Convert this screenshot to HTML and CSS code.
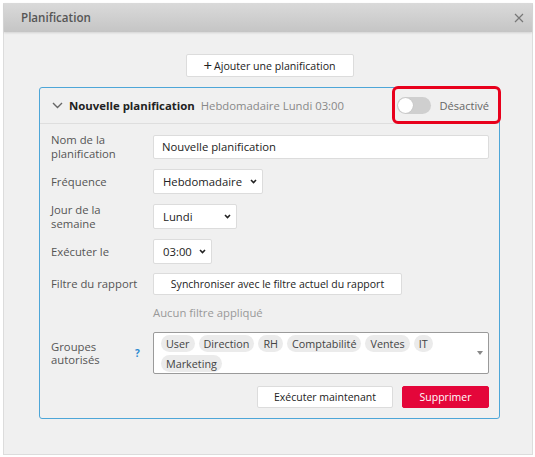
FILE: index.html
```html
<!DOCTYPE html>
<html>
<head>
    <title>Planification</title>
    <link rel="stylesheet" href="styles.css">
</head>
<body>
    <div class="dialog">
        <div class="dialog-header">
            <span class="dialog-title">Planification</span>
            <svg class="close-icon" width="10" height="10" viewBox="0 0 10 10">
                <path d="M1 1 L9 9 M9 1 L1 9" stroke="#777" stroke-width="1.2" fill="none"/>
            </svg>
        </div>

        <div class="dialog-body">
            <div class="add-row">
                <button class="btn btn-add"><span class="plus">+</span>Ajouter une planification</button>
            </div>

            <div class="schedule">
                <div class="schedule-header">
                    <svg class="chevron" width="11" height="7" viewBox="0 0 11 7">
                        <path d="M1 1 L5.5 5.5 L10 1" stroke="#666" stroke-width="1.4" fill="none"/>
                    </svg>
                    <span class="schedule-name">Nouvelle planification</span>
                    <span class="schedule-summary">Hebdomadaire Lundi 03:00</span>
                    <div class="status">
                        <span class="toggle"><span class="knob"></span></span>
                        <span class="status-text">Désactivé</span>
                        <span class="highlight"></span>
                    </div>
                </div>

                <div class="schedule-body">
                    <div class="row">
                        <label>Nom de la<br>planification</label>
                        <input class="text-input" type="text" value="Nouvelle planification">
                    </div>
                    <div class="row">
                        <label>Fréquence</label>
                        <div class="select sel-freq">Hebdomadaire
                            <svg width="7" height="5" viewBox="0 0 7 5"><path d="M1 1 L3.5 3.5 L6 1" stroke="#222" stroke-width="1.6" fill="none"/></svg>
                        </div>
                    </div>
                    <div class="row">
                        <label>Jour de la<br>semaine</label>
                        <div class="select sel-day">Lundi
                            <svg width="7" height="5" viewBox="0 0 7 5"><path d="M1 1 L3.5 3.5 L6 1" stroke="#222" stroke-width="1.6" fill="none"/></svg>
                        </div>
                    </div>
                    <div class="row">
                        <label>Exécuter le</label>
                        <div class="select sel-time">03:00
                            <svg width="7" height="5" viewBox="0 0 7 5"><path d="M1 1 L3.5 3.5 L6 1" stroke="#222" stroke-width="1.6" fill="none"/></svg>
                        </div>
                    </div>
                    <div class="row">
                        <label>Filtre du rapport</label>
                        <button class="btn btn-sync">Synchroniser avec le filtre actuel du rapport</button>
                    </div>
                    <div class="row row-note">
                        <label></label>
                        <span class="note">Aucun filtre appliqué</span>
                    </div>
                    <div class="row">
                        <label>Groupes<br>autorisés<span class="help">?</span></label>
                        <div class="multi">
                            <div class="chips">
                                <span class="chip">User</span>
                                <span class="chip">Direction</span>
                                <span class="chip">RH</span>
                                <span class="chip">Comptabilité</span>
                                <span class="chip">Ventes</span>
                                <span class="chip">IT</span>
                                <span class="chip">Marketing</span>
                            </div>
                            <span class="caret"></span>
                        </div>
                    </div>
                    <div class="actions">
                        <button class="btn btn-run">Exécuter maintenant</button>
                        <button class="btn btn-delete">Supprimer</button>
                    </div>
                </div>
            </div>
        </div>
    </div>
</body>
</html>
```

FILE: styles.css
```css
body {
    margin: 0;
    padding: 3px 2px 0 3px;
    background: #fff;
    font-family: 'Open Sans', sans-serif;
    font-size: 11.3px;
    color: #333;
}

.dialog {
    height: 452px;
    box-sizing: border-box;
    background: #f0f0f0;
    border: 1px solid #dcdcdc;
    border-top: none;
}

.dialog-header {
    height: 29px;
    display: flex;
    align-items: center;
    justify-content: space-between;
    padding: 0 8px 0 17px;
    background: linear-gradient(#dadada, #c5c5c5);
    box-shadow: 0 1px 2px rgba(0, 0, 0, 0.12);
}

.dialog-title {
    font-weight: 600;
    font-size: 11.6px;
    color: #555;
}

.dialog-body {
    padding: 22px 32px 0 35px;
}

.add-row {
    display: flex;
    justify-content: center;
    margin-bottom: 10px;
}

.btn {
    font-family: inherit;
    font-size: 10.5px;
    color: #222;
    background: #fff;
    border: 1px solid #dcdcdc;
    border-radius: 2px;
    cursor: pointer;
}

.btn-add {
    width: 168px;
    height: 23px;
    padding: 0;
    font-size: 10.6px;
}

.plus {
    font-size: 15px;
    line-height: 10px;
    margin-right: 2px;
    position: relative;
    top: 1px;
}

.schedule {
    border: 1px solid #4da6d8;
    border-radius: 3px;
}

.schedule-header {
    height: 35px;
    display: flex;
    align-items: center;
    padding: 0 10px 0 12px;
    border-bottom: 1px solid #dedede;
}

.chevron {
    margin-right: 6px;
}

.schedule-name {
    font-weight: 700;
    font-size: 11.4px;
    color: #222;
    margin-right: 6px;
}

.schedule-summary {
    color: #888;
    font-size: 11.3px;
}

.status {
    margin-left: auto;
    position: relative;
    display: flex;
    align-items: center;
    height: 17px;
}

.toggle {
    width: 34px;
    height: 17px;
    border-radius: 9px;
    background: #cfcfcf;
    display: flex;
    align-items: center;
    padding: 0 1px;
    box-sizing: border-box;
    margin-right: 8px;
}

.knob {
    width: 15px;
    height: 15px;
    border-radius: 50%;
    background: #fff;
    box-shadow: 0 0 1px rgba(0, 0, 0, 0.2);
}

.status-text {
    color: #666;
    font-size: 11.1px;
}

.highlight {
    position: absolute;
    left: -5px;
    right: -12px;
    top: -11px;
    bottom: -10px;
    border: 3px solid #e8001c;
    border-radius: 6px;
}

.schedule-body {
    padding: 9px 10px 10px 11px;
}

.row {
    display: flex;
    align-items: center;
    margin-bottom: 9px;
}

.row label {
    width: 102px;
    flex-shrink: 0;
    color: #555;
    line-height: 13.5px;
    position: relative;
}

.text-input {
    flex: 1;
    height: 24px;
    box-sizing: border-box;
    border: 1px solid #dcdcdc;
    border-radius: 2px;
    padding: 0 8px;
    font-family: inherit;
    font-size: 11.3px;
    color: #222;
    background: #fff;
}

.select {
    height: 25px;
    box-sizing: border-box;
    border: 1px solid #dcdcdc;
    border-radius: 2px;
    background: #fff;
    display: flex;
    align-items: center;
    justify-content: space-between;
    padding: 0 5px 0 9px;
    color: #222;
}

.sel-freq { width: 110px; }
.sel-day { width: 84px; }
.sel-time { width: 59px; }

.btn-sync {
    width: 249px;
    height: 22px;
    padding: 0;
}

.row-note {
    margin-bottom: 10px;
}

.note {
    color: #999;
    line-height: 18px;
}

.help {
    position: absolute;
    left: 84px;
    top: 7px;
    color: #2a8ad1;
    font-weight: 700;
    font-size: 10px;
}

.multi {
    flex: 1;
    height: 42px;
    box-sizing: border-box;
    border: 1px solid #9a9a9a;
    border-radius: 2px;
    background: #fff;
    display: flex;
    align-items: center;
    padding: 0 5px 0 7px;
}

.chips {
    flex: 1;
    display: flex;
    flex-wrap: wrap;
    gap: 3px 4px;
}

.chip {
    background: #ebebeb;
    border-radius: 9px;
    padding: 0 5px;
    line-height: 17px;
    font-size: 10.8px;
    color: #444;
}

.caret {
    width: 0;
    height: 0;
    border-left: 3px solid transparent;
    border-right: 3px solid transparent;
    border-top: 4px solid #888;
}

.actions {
    display: flex;
    justify-content: flex-end;
    gap: 9px;
    margin-top: 12px;
}

.btn-run {
    width: 136px;
    height: 22px;
    padding: 0;
}

.btn-delete {
    width: 87px;
    height: 22px;
    padding: 0;
    background: #e4063a;
    border-color: #e4063a;
    color: #fff;
}
```
